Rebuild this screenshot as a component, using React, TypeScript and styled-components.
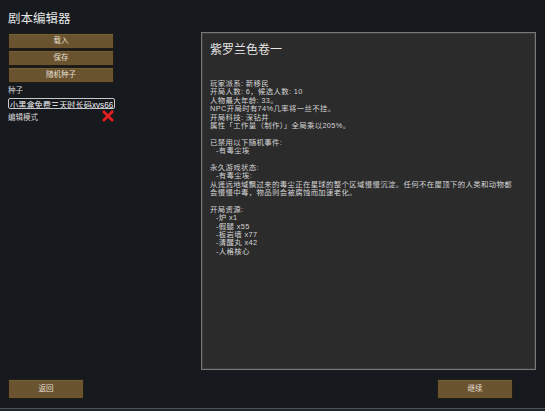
import React from 'react';
import styled, { createGlobalStyle } from 'styled-components';

const GlobalStyle = createGlobalStyle`
  html, body {
    margin: 0;
    padding: 0;
    background: #161a1f;
  }
  * {
    box-sizing: border-box;
  }
`;

const FONT = `"Liberation Sans", "Noto Sans CJK SC", sans-serif`;

const Page = styled.div`
  width: 545px;
  height: 411px;
  overflow: hidden;
  display: flex;
  flex-direction: column;
  background: #161a1f;
  color: #dcdcdc;
  font-family: ${FONT};
`;

const Header = styled.div`
  height: 32px;
  padding: 2px 0 0 8px;
  display: flex;
  align-items: center;
`;

const Title = styled.h1`
  margin: 0;
  font-size: 12.5px;
  font-weight: 400;
  color: #e4e4e4;
`;

const Main = styled.div`
  height: 338px;
  display: flex;
  justify-content: space-between;
  padding: 0 9px 0 8px;
`;

const Sidebar = styled.div`
  width: 107px;
  padding-top: 1px;
  display: flex;
  flex-direction: column;
`;

interface ButtonProps {
  $wide?: boolean;
}

const Button = styled.button<ButtonProps>`
  width: ${p => (p.$wide ? '76px' : '106px')};
  height: ${p => (p.$wide ? '20px' : '16px')};
  margin: 0 0 1px 0;
  padding: 0;
  background: #6a5430;
  border: 1px solid #211b11;
  box-shadow: inset 0 1px 0 rgba(255, 240, 200, 0.08);
  color: #e6dfd0;
  font-family: ${FONT};
  font-size: 7.5px;
  line-height: 1;
  cursor: pointer;
  display: flex;
  align-items: center;
  justify-content: center;
`;

const Label = styled.div`
  margin-top: 1px;
  height: 12px;
  line-height: 12px;
  font-size: 7.5px;
  color: #d8d8d8;
`;

const SeedInput = styled.input`
  margin-top: 1px;
  width: 107px;
  height: 11px;
  padding: 0 1px;
  background: #15181d;
  border: 1px solid #c9c9c9;
  border-radius: 2px;
  color: #f0f0f0;
  font-family: ${FONT};
  font-size: 8.2px;
  outline: none;
`;

const ToggleRow = styled.div`
  margin-top: 1px;
  height: 12px;
  padding-right: 1px;
  display: flex;
  align-items: center;
  justify-content: space-between;
  font-size: 7.5px;
  color: #d8d8d8;
`;

const Panel = styled.div`
  width: 335px;
  height: 338px;
  background: #2b2b2c;
  border: 1px solid #787878;
  box-shadow: inset 0 0 0 1px #3a3a3b;
  padding: 9px 8px;
`;

const PanelTitle = styled.div`
  font-size: 12px;
  line-height: 16px;
  color: #e6e6e6;
`;

const Body = styled.div`
  margin-top: 22px;
  font-size: 7.4px;
  letter-spacing: 0.35px;
  line-height: 8.4px;
  color: #d4d4d4;
`;

const Line = styled.div<{ $indent?: boolean }>`
  height: 8.4px;
  white-space: nowrap;
  padding-left: ${p => (p.$indent ? '6px' : '0')};
`;

const Footer = styled.div`
  flex: 1;
  display: flex;
  justify-content: space-between;
  align-items: flex-start;
  padding: 9px 32px 0 8px;
`;

const BottomEdge = styled.div`
  height: 3px;
  border-top: 1px solid #4a525c;
  background: #1f242b;
`;

const CloseMark = () => (
  <svg width="12" height="12" viewBox="0 0 12 12">
    <path d="M2 2 L10 10 M10 2 L2 10" stroke="#7a0e0e" strokeWidth="3.2" strokeLinecap="square" />
    <path d="M2 2 L10 10 M10 2 L2 10" stroke="#e22323" strokeWidth="2.4" strokeLinecap="square" />
  </svg>
);

const lines: { text: string; indent?: boolean }[] = [
  { text: '玩家派系: 新移民' },
  { text: '开局人数: 6，候选人数: 10' },
  { text: '人物最大年龄: 33。' },
  { text: 'NPC开局时有74%几率将一丝不挂。' },
  { text: '开局科技: 深钻井' },
  { text: '属性「工作量（制作）」全局乘以205%。' },
  { text: '' },
  { text: '已禁用以下随机事件:' },
  { text: '-有毒尘埃', indent: true },
  { text: '' },
  { text: '永久游戏状态:' },
  { text: '-有毒尘埃:', indent: true },
  { text: '从遥远地域飘过来的毒尘正在星球的整个区域慢慢沉淀。任何不在屋顶下的人类和动物都' },
  { text: '会慢慢中毒，物品则会被腐蚀而加速老化。' },
  { text: '' },
  { text: '开局资源:' },
  { text: '-炉 x1', indent: true },
  { text: '-假腿 x55', indent: true },
  { text: '-板岩墙 x77', indent: true },
  { text: '-清醒丸 x42', indent: true },
  { text: '-人格核心', indent: true },
];

const App: React.FC = () => {
  return (
    <Page>
      <GlobalStyle />
      <Header>
        <Title>剧本编辑器</Title>
      </Header>

      <Main>
        <Sidebar>
          <Button>载入</Button>
          <Button>保存</Button>
          <Button>随机种子</Button>
          <Label>种子</Label>
          <SeedInput defaultValue="小黑盒免费三天时长码xys666" />
          <ToggleRow>
            <span>编辑模式</span>
            <CloseMark />
          </ToggleRow>
        </Sidebar>

        <Panel>
          <PanelTitle>紫罗兰色卷一</PanelTitle>
          <Body>
            {lines.map((l, i) => (
              <Line key={i} $indent={l.indent}>{l.text}</Line>
            ))}
          </Body>
        </Panel>
      </Main>

      <Footer>
        <Button $wide>返回</Button>
        <Button $wide>继续</Button>
      </Footer>
      <BottomEdge />
    </Page>
  );
};

export default App;
